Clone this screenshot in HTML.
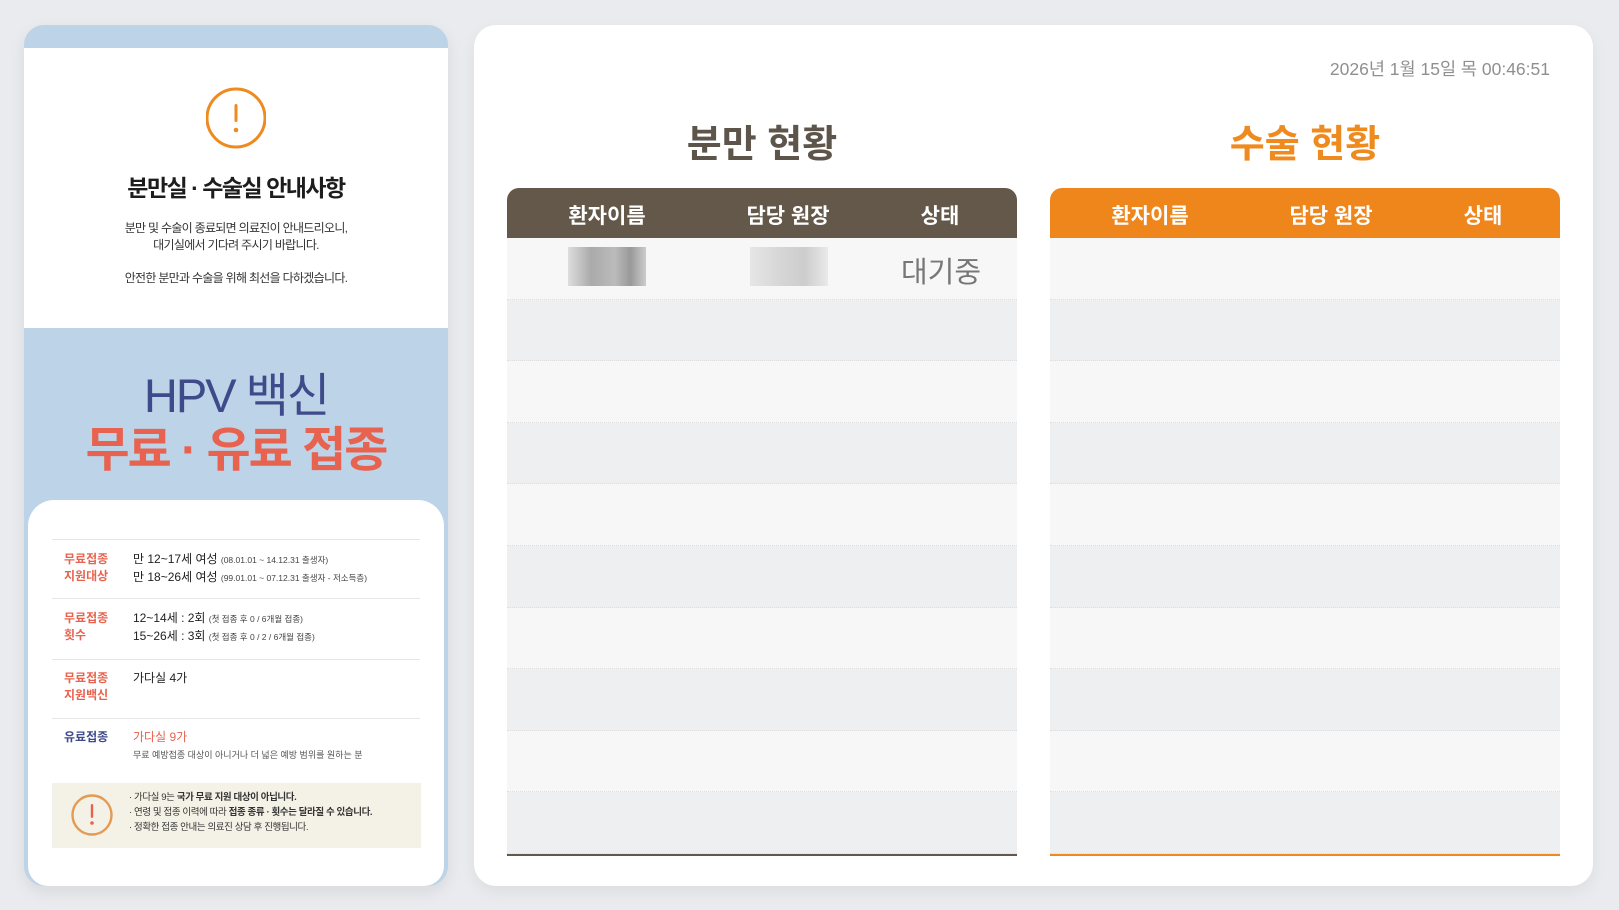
<!DOCTYPE html>
<html><head><meta charset="utf-8"><style>
*{margin:0;padding:0;box-sizing:border-box}
body{width:1619px;height:910px;background:#e9ebee;font-family:"Liberation Sans","Noto Sans CJK KR",sans-serif;position:relative;overflow:hidden}
.card{position:absolute;left:24px;top:25px;width:424px;height:861px;border-radius:20px;background:#bcd3e8;overflow:hidden;box-shadow:0 6px 16px rgba(0,0,0,.08)}
.top{position:absolute;left:0;top:23px;width:424px;height:280px;background:#fff;text-align:center}
.inner{position:absolute;left:4px;top:475px;width:416px;height:386px;background:#fff;border-radius:26px 26px 20px 20px}
.panel{position:absolute;left:474px;top:25px;width:1119px;height:861px;background:#fff;border-radius:22px;box-shadow:0 6px 16px rgba(0,0,0,.06)}
.tbl{position:absolute;top:163px;width:510px}
.hd{height:50px;border-radius:12px 12px 0 0;color:#fff;font-weight:bold;font-size:21px;position:relative}
.hd span{position:absolute;top:12px;transform:translateX(-50%)}
.row{height:61.6px;border-bottom:1px dotted #dedede}
.row:nth-child(odd){background:#f7f7f7}
.row:nth-child(even){background:#eeeff0}
.lab{position:absolute;left:36px;font-size:12px;font-weight:bold;color:#e8634f;line-height:17px}
.val{position:absolute;left:105px;font-size:12px;color:#222;line-height:17px}
.val small{font-size:8.5px;color:#444}
.ln{position:absolute;left:24px;width:368px;height:1px;background:#e6e6e6}
</style></head><body>
<div class="card">
 <div class="top">
  <svg style="position:absolute;left:182px;top:38px" width="60" height="64" viewBox="0 0 60 64"><circle cx="30" cy="32" r="29" fill="none" stroke="#ef8a1f" stroke-width="3"/><rect x="28.5" y="18" width="3" height="18" rx="1.5" fill="#ef8a1f"/><circle cx="30" cy="44" r="2.3" fill="#ef8a1f"/></svg>
  <div style="position:absolute;left:0;width:424px;top:121px;font-size:23px;font-weight:bold;color:#1d1d1d;letter-spacing:-1.5px">분만실 · 수술실 안내사항</div>
  <div style="position:absolute;left:0;width:424px;top:172px;font-size:12px;color:#333;line-height:17px;letter-spacing:-.7px">분만 및 수술이 종료되면 의료진이 안내드리오니,<br>대기실에서 기다려 주시기 바랍니다.<br><span style="display:block;height:16px"></span>안전한 분만과 수술을 위해 최선을 다하겠습니다.</div>
 </div>
 <div style="position:absolute;left:0;width:424px;top:343px;text-align:center;font-size:47px;color:#3f4a8a;letter-spacing:-2px;line-height:56px">HPV 백신</div>
 <div style="position:absolute;left:0;width:424px;top:396px;text-align:center;font-size:48px;font-weight:bold;color:#e8634f;letter-spacing:-2px;line-height:60px">무료 · 유료 접종</div>
 <div class="inner">
  <div class="ln" style="top:39px"></div>
  <div class="lab" style="top:51px">무료접종<br>지원대상</div>
  <div class="val" style="top:51px">만 12~17세 여성 <small>(08.01.01 ~ 14.12.31 출생자)</small><br>만 18~26세 여성 <small>(99.01.01 ~ 07.12.31 출생자 - 저소득층)</small></div>
  <div class="ln" style="top:98px"></div>
  <div class="lab" style="top:110px">무료접종<br>횟수</div>
  <div class="val" style="top:110px">12~14세 : 2회 <small>(첫 접종 후 0 / 6개월 접종)</small><br>15~26세 : 3회 <small>(첫 접종 후 0 / 2 / 6개월 접종)</small></div>
  <div class="ln" style="top:159px"></div>
  <div class="lab" style="top:170px">무료접종<br>지원백신</div>
  <div class="val" style="top:170px">가다실 4가</div>
  <div class="ln" style="top:218px"></div>
  <div class="lab" style="top:229px;color:#3f4a8a">유료접종</div>
  <div class="val" style="top:229px;color:#e8634f">가다실 9가</div>
  <div class="val" style="top:247px;font-size:9px;color:#555">무료 예방접종 대상이 아니거나 더 넓은 예방 범위를 원하는 분</div>
  <div style="position:absolute;left:24px;top:283px;width:369px;height:65px;background:#f4f1e6">
   <svg style="position:absolute;left:19px;top:11px" width="42" height="42" viewBox="0 0 42 42"><circle cx="21" cy="21" r="19.5" fill="none" stroke="#e39a55" stroke-width="2.4"/><rect x="19.8" y="10" width="2.4" height="14" rx="1.2" fill="#e8634f"/><circle cx="21" cy="29" r="1.8" fill="#e8634f"/></svg>
   <div style="position:absolute;left:77px;top:7px;font-size:9.5px;line-height:15px;color:#333;letter-spacing:-.4px">· 가다실 9는 <b>국가 무료 지원 대상이 아닙니다.</b><br>· 연령 및 접종 이력에 따라 <b>접종 종류 · 횟수는 달라질 수 있습니다.</b><br>· 정확한 접종 안내는 의료진 상담 후 진행됩니다.</div>
  </div>
 </div>
</div>
<div class="panel">
 <div style="position:absolute;right:43px;top:31px;font-size:17.5px;color:#8f8f8f">2026년 1월 15일 목 00:46:51</div>
 <div style="position:absolute;left:33px;width:510px;top:88px;text-align:center;font-size:38px;font-weight:bold;color:#5e554a">분만 현황</div>
 <div style="position:absolute;left:576px;width:510px;top:88px;text-align:center;font-size:38px;font-weight:bold;color:#ef8a1f">수술 현황</div>
 <div class="tbl" style="left:33px;border-bottom:2px solid #635849">
  <div class="hd" style="background:#635849"><span style="left:100px">환자이름</span><span style="left:281px">담당 원장</span><span style="left:433px">상태</span></div>
  <div>
   <div class="row" style="position:relative">
    <div style="position:absolute;left:61px;top:9px;width:78px;height:39px;background:linear-gradient(90deg,#ddd,#aaa 30%,#bbb 60%,#999 80%,#ccc)"></div>
    <div style="position:absolute;left:243px;top:9px;width:78px;height:39px;background:linear-gradient(90deg,#e4e4e4,#d2d2d2 40%,#c8c8c8 70%,#e8e8e8);opacity:.9"></div>
    <div style="position:absolute;left:394px;top:11px;font-size:29px;color:#777">대기중</div>
   </div>
   <div class="row"></div><div class="row"></div><div class="row"></div><div class="row"></div><div class="row"></div><div class="row"></div><div class="row"></div><div class="row"></div><div class="row"></div>
  </div>
 </div>
 <div class="tbl" style="left:576px;border-bottom:2px solid #ef8a1f">
  <div class="hd" style="background:#ef861c"><span style="left:100px">환자이름</span><span style="left:281px">담당 원장</span><span style="left:433px">상태</span></div>
  <div>
   <div class="row"></div><div class="row"></div><div class="row"></div><div class="row"></div><div class="row"></div><div class="row"></div><div class="row"></div><div class="row"></div><div class="row"></div><div class="row"></div>
  </div>
 </div>
</div>
</body></html>
